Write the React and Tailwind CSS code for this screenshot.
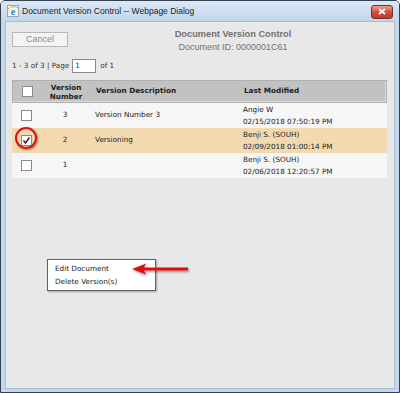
export default function App() {
  const rows = [
    { n: '3', desc: 'Version Number 3', who: 'Angie W', when: '02/15/2018 07:50:19 PM' },
    { n: '2', desc: 'Versioning', who: 'Benji S. (SOUH)', when: '02/09/2018 01:00:14 PM', sel: true },
    { n: '1', desc: '', who: 'Benji S. (SOUH)', when: '02/06/2018 12:20:57 PM' },
  ];

  const Box = ({ checked }) => (
    <div className="w-[11px] h-[11px] border border-[#8a8a8a] bg-white flex items-center justify-center">
      {checked && (
        <svg width="9" height="9" viewBox="0 0 9 9">
          <path d="M1.5 4.5 L3.5 7 L7.5 1.5" fill="none" stroke="#222" strokeWidth="1.4" />
        </svg>
      )}
    </div>
  );

  return (
    <div className="w-[400px] h-[393px] bg-white" style={{ fontFamily: '"DejaVu Sans", Verdana, sans-serif' }}>
      <div className="w-full h-full bg-[#c3d6ec] border border-[#34404e] rounded-t-[5px] flex flex-col relative overflow-hidden">
        {/* title bar */}
        <div className="h-[20px] flex items-center px-[6px] bg-gradient-to-b from-[#dbe8f6] to-[#c3d6ec]">
          <svg width="12" height="12" viewBox="0 0 12 12" className="mr-[3px]">
            <rect x="0.5" y="0.5" width="11" height="11" fill="#f4f4f4" stroke="#9aa6b4" />
            <text x="6" y="10" textAnchor="middle" fontSize="10" fontWeight="bold" fill="#2a7fd4" fontFamily="Liberation Serif, serif">e</text>
            <path d="M1 4 Q6 0 11 3" fill="none" stroke="#e8b020" strokeWidth="1" />
          </svg>
          <span className="text-[8.5px] text-[#1b1b1b] leading-none" style={{ fontFamily: '"Liberation Sans", Arial, sans-serif' }}>
            Document Version Control -- Webpage Dialog
          </span>
          <div className="ml-auto mt-[1px] w-[22px] h-[14px] rounded-[3px] border border-[#7a3024] bg-gradient-to-b from-[#e8a092] via-[#d0503c] to-[#c03a28] flex items-center justify-center">
            <svg width="8" height="7" viewBox="0 0 8 7">
              <path d="M1 1 L7 6 M7 1 L1 6" stroke="white" strokeWidth="1.8" />
            </svg>
          </div>
        </div>

        {/* content */}
        <div className="flex-1 mx-[4px] mb-[3px] bg-[#e8e8e8] border border-[#a7bbd5] px-[6px] relative">
          <div className="flex items-start pt-[10px]">
            <div className="w-[56px] h-[15px] border border-[#b8b8b8] bg-[#f4f4f4] flex items-center justify-center text-[9px] text-[#8a8a8a]" style={{ fontFamily: '"Liberation Sans", Arial, sans-serif' }}>
              Cancel
            </div>
            <div className="flex-1 flex flex-col items-center pl-[10px] -mt-[4px] text-[#727272] leading-[13px]" style={{ fontFamily: '"Liberation Sans", Arial, sans-serif' }}>
              <div className="text-[9.25px] font-bold">Document Version Control</div>
              <div className="text-[9px]">Document ID: 0000001C61</div>
            </div>
          </div>

          <div className="flex items-center mt-[5px] text-[7.25px] text-[#333]">
            <span>1 - 3 of 3 | Page</span>
            <div className="w-[24px] h-[14px] border border-[#8a8a8a] bg-white ml-[3px] mr-[4px] flex items-center pl-[2px]">1</div>
            <span>of 1</span>
          </div>

          <div className="mt-[7px] w-[375px] bg-[#f6f6f6] text-[7.25px] text-[#222]">
            <div className="h-[23px] flex items-center bg-[#c2c2c2] border border-[#b0b0b0] shadow-[inset_-1px_-1px_0_#d8d8d8] font-bold">
              <div className="w-[28px] flex justify-center"><Box /></div>
              <div className="w-[50px] text-center leading-[9px]">Version<br />Number</div>
              <div className="w-[148px] pl-[5px]">Version Description</div>
              <div className="flex-1 pl-[5px]">Last Modified</div>
            </div>
            {rows.map((r) => (
              <div key={r.n} className={`h-[25px] flex items-center ${r.sel ? 'bg-[#f2d9b0]' : ''}`}>
                <div className="w-[28px] flex justify-center relative">
                  <Box checked={r.sel} />
                  {r.sel && (
                    <div className="absolute left-[3px] top-[-8px] w-[22px] h-[22px] rounded-full border-[2px] border-[#e01010] shadow-[1px_1px_2px_rgba(0,0,0,0.45)]" />
                  )}
                </div>
                <div className="w-[50px] text-center">{r.n}</div>
                <div className="w-[148px] pl-[5px]">{r.desc}</div>
                <div className="flex-1 pl-[5px] leading-[12px]">
                  <div>{r.who}</div>
                  <div>{r.when}</div>
                </div>
              </div>
            ))}
          </div>

          {/* context menu */}
          <div className="absolute left-[41px] top-[237px] w-[109px] h-[32px] bg-white border border-[#5a6370] shadow-[1px_1px_2px_rgba(0,0,0,0.3)] flex flex-col justify-center pl-[7px] text-[7.25px] text-[#222] leading-[13px]">
            <div>Edit Document</div>
            <div>Delete Version(s)</div>
          </div>
          <svg className="absolute left-[122px] top-[240px]" width="66" height="16" viewBox="0 0 66 16">
            <defs>
              <filter id="sh" x="-10%" y="-30%" width="130%" height="180%">
                <feDropShadow dx="1" dy="1.5" stdDeviation="1" floodOpacity="0.4" />
              </filter>
            </defs>
            <path d="M4 7 L18 1.5 L16 5.5 L60 5.5 L60 8.5 L16 8.5 L18 12.5 Z" fill="#e01010" filter="url(#sh)" />
          </svg>
        </div>
      </div>
    </div>
  );
}
